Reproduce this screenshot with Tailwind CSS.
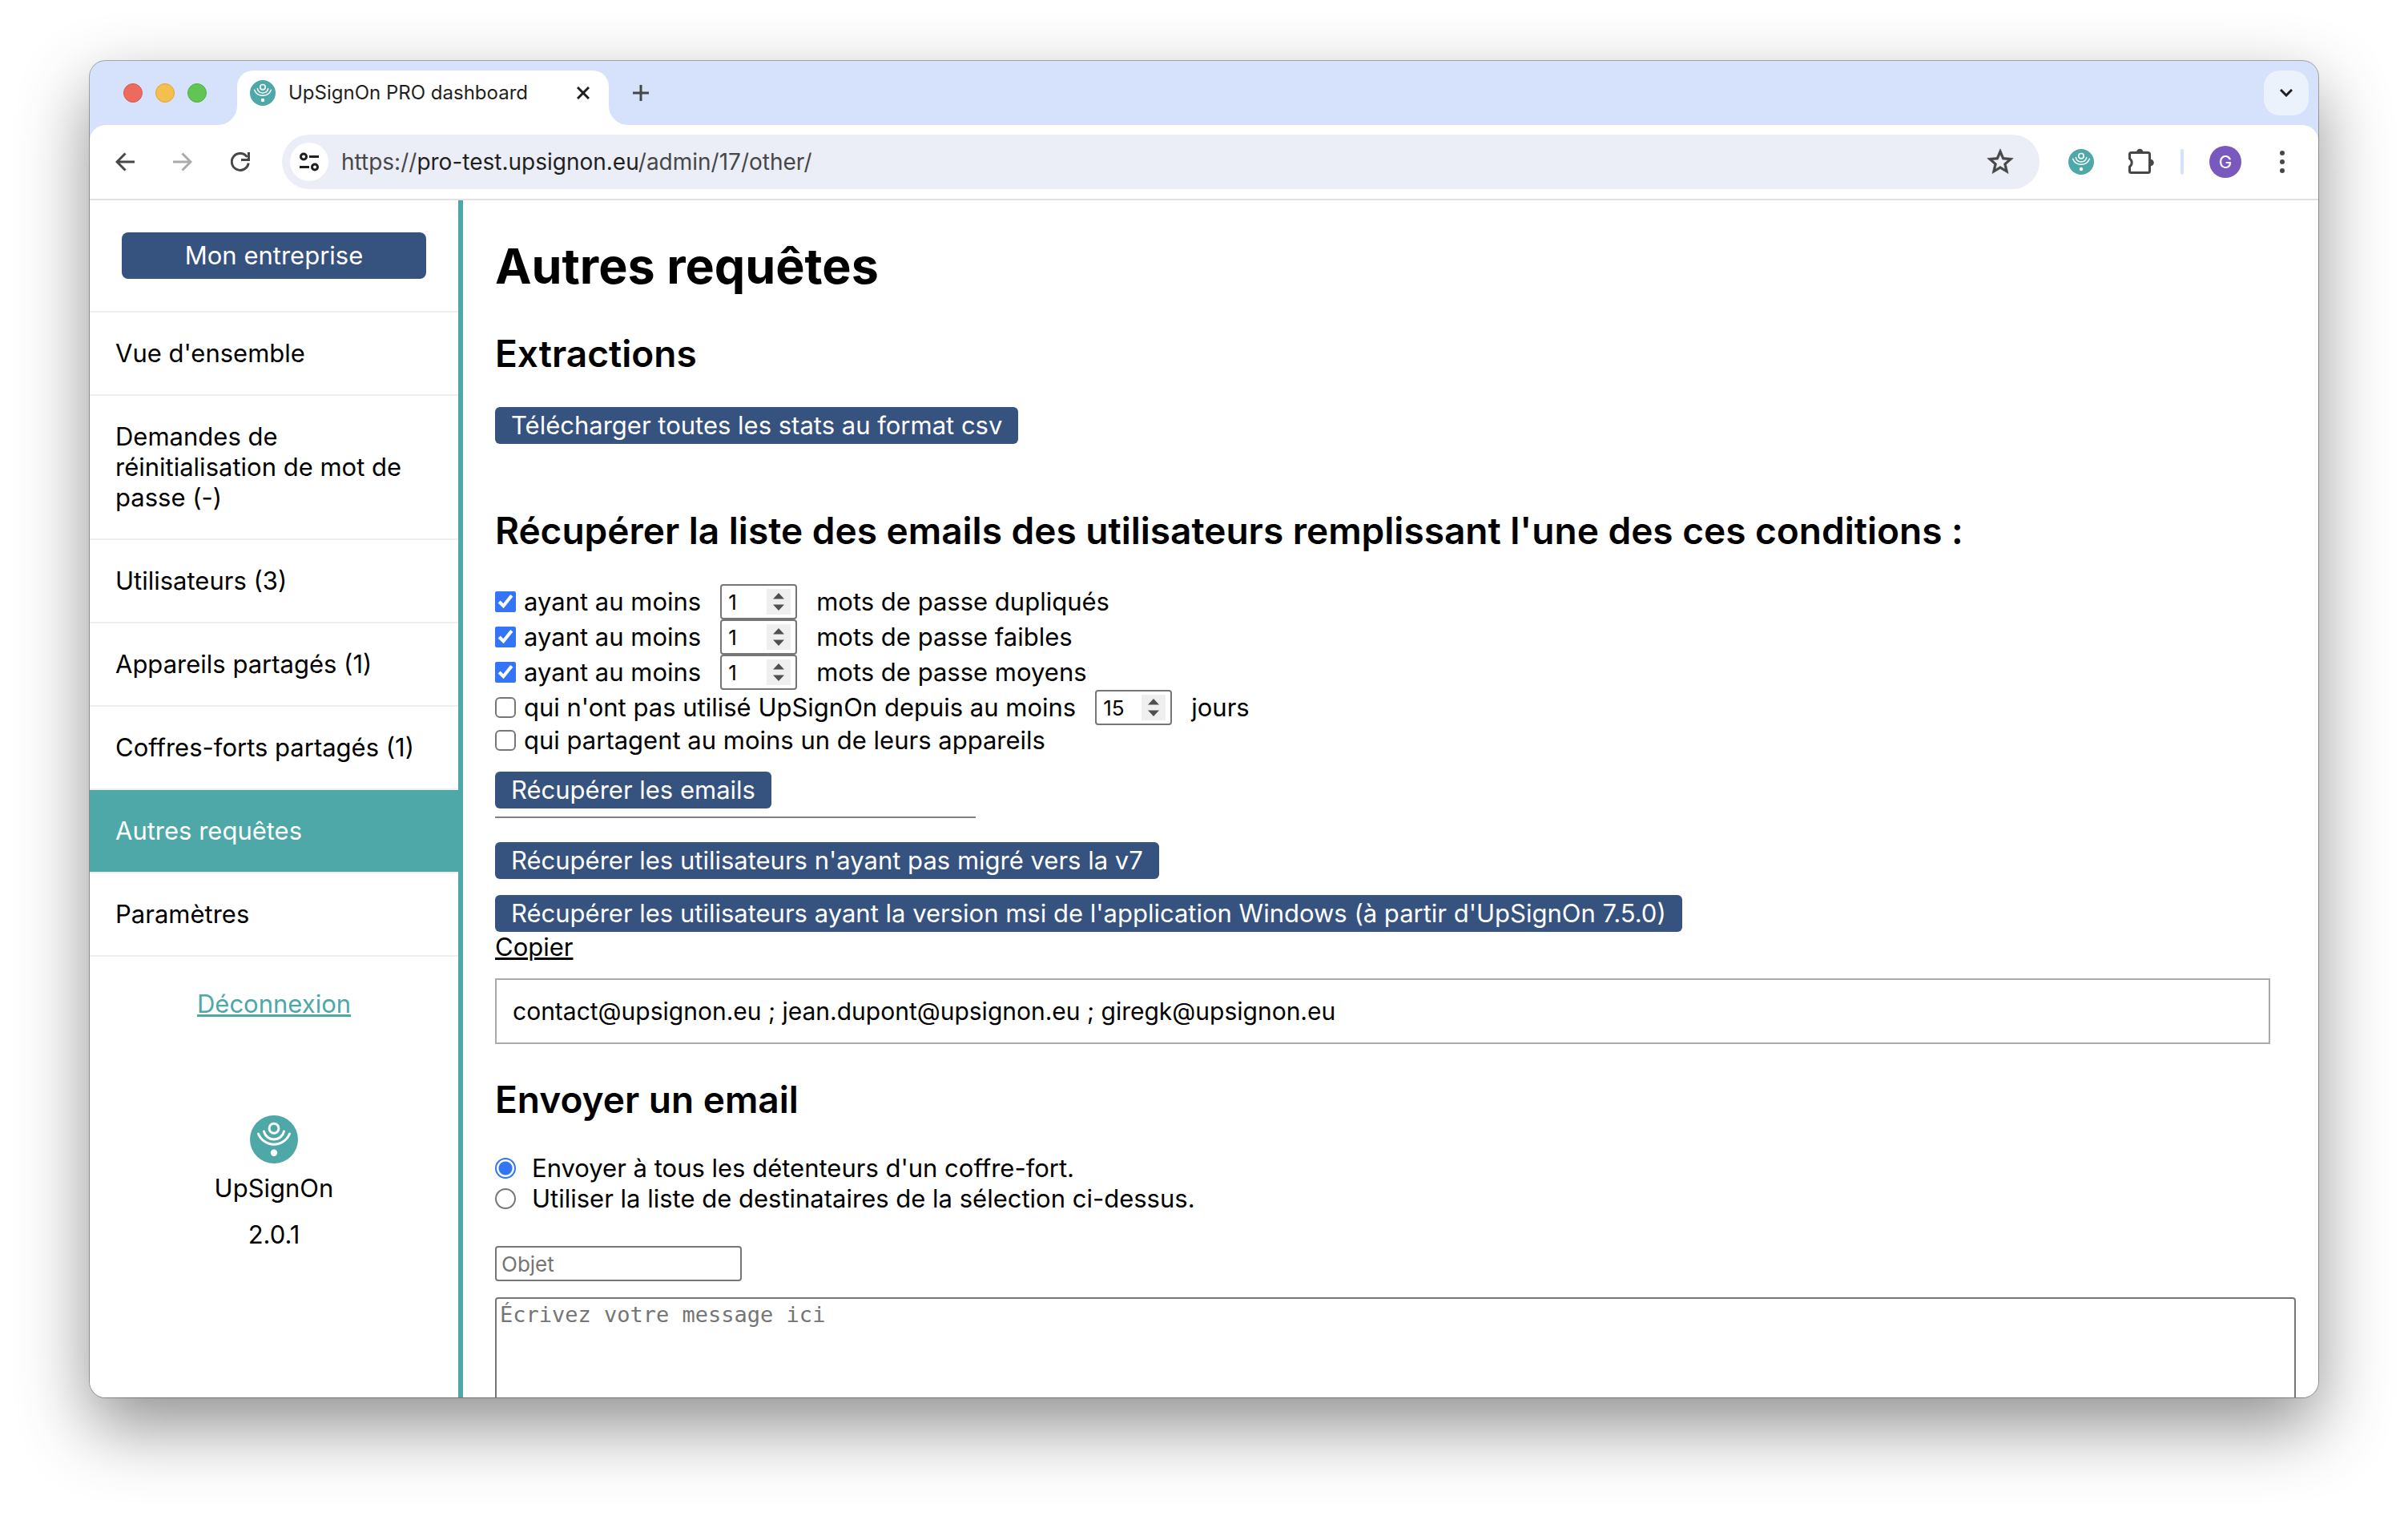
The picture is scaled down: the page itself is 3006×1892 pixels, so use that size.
<!DOCTYPE html>
<html lang="fr">
<head>
<meta charset="utf-8">
<title>UpSignOn PRO dashboard</title>
<script src="https://cdn.jsdelivr.net/npm/@tailwindcss/browser@4"></script>
</head>
<body class="h-screen overflow-hidden bg-white px-[112px] pt-[76px] pb-[148px] font-[Inter,'Liberation_Sans',sans-serif] text-black">

<svg class="hidden">
  <symbol id="logo" viewBox="0 0 60 60">
    <circle cx="30" cy="30" r="30" fill="#4da8a7"/>
    <circle cx="30" cy="16.300" r="6" fill="none" stroke="#fff" stroke-width="3"/>
    <path d="M17.500 20a12.800 12.800 0 0 0 25 0M10.500 23a21 21 0 0 0 39 0" fill="none" stroke="#fff" stroke-width="3" stroke-linecap="round"/>
    <circle cx="30" cy="46.700" r="4.200" fill="#fff"/>
  </symbol>
  <symbol id="spin" viewBox="0 0 30 32">
    <rect width="30" height="32" fill="#efefef"/>
    <path d="M15 5l7 7.500H8zM15 27l7-7.500H8z" fill="#505050"/>
  </symbol>
</svg>

<div class="flex h-full flex-col overflow-hidden rounded-[20px] bg-[#d6e1fb] shadow-[0_0_0_1px_rgba(0,0,0,0.3),0_36px_88px_rgba(0,0,0,0.44)]">

  <!-- Tab strip -->
  <header class="flex h-20 shrink-0 items-end">
    <div class="flex h-full items-center gap-4 pl-[42px]">
      <span class="size-6 rounded-full border border-[#d9584e] bg-[#ec6a5e]"></span>
      <span class="size-6 rounded-full border border-[#dfa53c] bg-[#f4bf4f]"></span>
      <span class="size-6 rounded-full border border-[#50b03f] bg-[#61c554]"></span>
    </div>
    <svg class="ml-[14px] size-6" viewBox="0 0 24 24"><path d="M24 0v24H0A24 24 0 0 0 24 0z" fill="#fff"/></svg>
    <div class="flex h-17 w-[464px] items-center rounded-t-[20px] bg-white pr-6 pb-3 pl-4">
      <svg class="size-8"><use href="#logo"/></svg>
      <span class="ml-4 flex-1 text-2xl leading-8 text-[#1f1f1f]">UpSignOn PRO dashboard</span>
      <button aria-label="Fermer l'onglet"><svg class="size-4" viewBox="0 0 16 16"><path d="M1 1l14 14M15 1L1 15" stroke="#1f1f1f" stroke-width="3"/></svg></button>
    </div>
    <svg class="size-6" viewBox="0 0 24 24"><path d="M0 0v24H24A24 24 0 0 1 0 0z" fill="#fff"/></svg>
    <button aria-label="Nouvel onglet" class="mb-[30px] ml-[6px]"><svg class="size-5" viewBox="0 0 20 20"><path d="M10 0v20M0 10h20" stroke="#474747" stroke-width="3"/></svg></button>
    <button aria-label="Rechercher des onglets" class="mr-3 mb-3 ml-auto grid size-14 place-items-center rounded-[20px] bg-[#ebf2fc]"><svg class="w-4" viewBox="0 0 16 10"><path d="M1 1l7 7 7-7" fill="none" stroke="#1f1f1f" stroke-width="3"/></svg></button>
  </header>

  <!-- Toolbar -->
  <div class="flex h-[94px] shrink-0 items-center rounded-t-[20px] border-b-2 border-[#e1e1e1] bg-white pr-[42px] pl-8">
    <button aria-label="Précédent"><svg class="size-6" viewBox="0 0 24 24"><path d="M24 12H2M12.500 1.500L2 12l10.500 10.500" fill="none" stroke="#474747" stroke-width="3"/></svg></button>
    <button aria-label="Suivant" class="ml-12"><svg class="size-6" viewBox="0 0 24 24"><path d="M0 12h22M11.500 1.500L22 12 11.500 22.500" fill="none" stroke="#ababab" stroke-width="3"/></svg></button>
    <button aria-label="Actualiser" class="ml-12"><svg class="size-6" viewBox="0 0 24 24"><path d="M22.200 13.500A10.500 10.500 0 1 1 20.500 6" fill="none" stroke="#474747" stroke-width="3"/><path d="M22.500 0v9.500H13" fill="none" stroke="#474747" stroke-width="3"/></svg></button>
    <div class="ml-10 flex h-[68px] flex-1 items-center rounded-full bg-[#ebeef7] pr-8 pl-[10px]">
      <button aria-label="Informations sur le site" class="grid size-12 place-items-center rounded-full bg-white"><svg class="size-6" viewBox="0 0 24 24"><g fill="none" stroke="#1f1f1f" stroke-width="3"><circle cx="5" cy="5.500" r="3.500"/><circle cx="19" cy="18.500" r="3.500"/><path d="M12 5.500h12M0 18.500h12"/></g></svg></button>
      <p class="ml-4 flex-1 text-[28px] leading-9 text-[#474747]">https://<span class="text-[#1f1f1f]">pro-test.upsignon.eu</span>/admin/17/other/</p>
      <button aria-label="Ajouter aux favoris"><svg class="size-[34px]" viewBox="1.500 1.500 21 21"><path d="M22 9.240l-7.190-.620L12 2 9.190 8.630 2 9.240l5.460 4.730L5.820 21 12 17.270 18.180 21l-1.630-7.030L22 9.240zM12 15.400l-3.760 2.270 1-4.280-3.320-2.880 4.380-.380L12 6.100l1.710 4.040 4.380.380-3.320 2.880 1 4.280L12 15.400z" fill="#474747" stroke="#474747" stroke-width="0.400"/></svg></button>
    </div>
    <button aria-label="UpSignOn" class="ml-9"><svg class="size-8"><use href="#logo"/></svg></button>
    <button aria-label="Extensions" class="ml-10"><svg class="size-9" viewBox="0 0 36 36"><path d="M4.500 8.500a2 2 0 0 1 2-2h21a2 2 0 0 1 2 2v21a2 2 0 0 1-2 2h-21a2 2 0 0 1-2-2V24a6 6 0 0 0 0-10z" fill="none" stroke="#474747" stroke-width="3" stroke-linejoin="round"/><path d="M13 6a4.300 4.300 0 0 1 8.600 0zM30.500 14.700a4.300 4.300 0 0 1 0 8.600z" fill="#474747"/></svg></button>
    <span class="ml-8 h-8 w-1 rounded-full bg-[#d6e1fb]"></span>
    <button class="ml-8 size-10 rounded-full bg-[#7959bd] text-[22px] leading-10 text-white">G</button>
    <button aria-label="Menu" class="ml-12"><svg class="h-7 w-[6px]" viewBox="0 0 6 28"><g fill="#474747"><circle cx="3" cy="3" r="3"/><circle cx="3" cy="14" r="3"/><circle cx="3" cy="25" r="3"/></g></svg></button>
  </div>

  <!-- Page -->
  <div class="flex min-h-0 flex-1 overflow-hidden bg-white text-[31px] leading-[38px]">

    <aside class="w-[466px] shrink-0 border-r-[6px] border-[#4da8a7] text-center">
      <div class="border-b-2 border-[#eee] p-10">
        <button class="h-[58px] w-full rounded-lg bg-[#36527f] text-white">Mon entreprise</button>
      </div>
      <nav class="flex flex-col text-left">
        <a href="#" class="border-b-2 border-[#eee] p-8">Vue d'ensemble</a>
        <a href="#" class="border-b-2 border-[#eee] p-8">Demandes de réinitialisation de mot de passe (-)</a>
        <a href="#" class="border-b-2 border-[#eee] p-8">Utilisateurs (3)</a>
        <a href="#" class="border-b-2 border-[#eee] p-8">Appareils partagés (1)</a>
        <a href="#" class="border-b-2 border-[#eee] p-8">Coffres-forts partagés (1)</a>
        <a href="#" class="border-b-2 border-[#eee] bg-[#4da8a7] p-8 text-white">Autres requêtes</a>
        <a href="#" class="border-b-2 border-[#eee] p-8">Paramètres</a>
      </nav>
      <a href="#" class="mt-10 inline-block text-[#4da8a7] underline">Déconnexion</a>
      <svg class="mx-auto mt-[120px] size-15"><use href="#logo"/></svg>
      <p class="mt-3">UpSignOn</p>
      <p class="mt-5">2.0.1</p>
    </aside>

    <main class="min-w-0 flex-1 pr-7 pl-10">
      <h1 class="mt-11 text-[61px] leading-[76px] font-bold">Autres requêtes</h1>
      <h2 class="mt-[42px] text-[46px] leading-[58px] font-semibold">Extractions</h2>
      <button class="mt-[38px] block h-[46px] rounded-md bg-[#36527f] px-5 text-white">Télécharger toutes les stats au format csv</button>

      <h2 class="mt-[79px] text-[46px] leading-[58px] font-semibold">Récupérer la liste des emails des utilisateurs remplissant l'une des ces conditions :</h2>
      <form class="mt-[38px]">
        <div class="flex h-11 items-center">
          <input id="c1" type="checkbox" checked class="size-[26px] accent-[#3375f6] not-checked:appearance-none not-checked:rounded-md not-checked:border-2 not-checked:border-[#767676]">
          <label for="c1" class="ml-[10px]">ayant au moins</label>
          <span class="relative ml-6"><input aria-label="Mots de passe dupliqués" type="number" value="1" class="block h-11 w-24 appearance-none rounded border-2 border-[#767676] bg-white pl-2 text-[26px] [&::-webkit-inner-spin-button]:appearance-none"><svg class="pointer-events-none absolute top-[6px] right-2 h-8 w-[30px]"><use href="#spin"/></svg></span>
          <span class="ml-6">mots de passe dupliqués</span>
        </div>
        <div class="flex h-11 items-center">
          <input id="c2" type="checkbox" checked class="size-[26px] accent-[#3375f6] not-checked:appearance-none not-checked:rounded-md not-checked:border-2 not-checked:border-[#767676]">
          <label for="c2" class="ml-[10px]">ayant au moins</label>
          <span class="relative ml-6"><input aria-label="Mots de passe faibles" type="number" value="1" class="block h-11 w-24 appearance-none rounded border-2 border-[#767676] bg-white pl-2 text-[26px] [&::-webkit-inner-spin-button]:appearance-none"><svg class="pointer-events-none absolute top-[6px] right-2 h-8 w-[30px]"><use href="#spin"/></svg></span>
          <span class="ml-6">mots de passe faibles</span>
        </div>
        <div class="flex h-11 items-center">
          <input id="c3" type="checkbox" checked class="size-[26px] accent-[#3375f6] not-checked:appearance-none not-checked:rounded-md not-checked:border-2 not-checked:border-[#767676]">
          <label for="c3" class="ml-[10px]">ayant au moins</label>
          <span class="relative ml-6"><input aria-label="Mots de passe moyens" type="number" value="1" class="block h-11 w-24 appearance-none rounded border-2 border-[#767676] bg-white pl-2 text-[26px] [&::-webkit-inner-spin-button]:appearance-none"><svg class="pointer-events-none absolute top-[6px] right-2 h-8 w-[30px]"><use href="#spin"/></svg></span>
          <span class="ml-6">mots de passe moyens</span>
        </div>
        <div class="flex h-11 items-center">
          <input id="c4" type="checkbox" class="size-[26px] accent-[#3375f6] not-checked:appearance-none not-checked:rounded-md not-checked:border-2 not-checked:border-[#767676]">
          <label for="c4" class="ml-[10px]">qui n'ont pas utilisé UpSignOn depuis au moins</label>
          <span class="relative ml-6"><input aria-label="Nombre de jours" type="number" value="15" class="block h-11 w-24 appearance-none rounded border-2 border-[#767676] bg-white pl-2 text-[26px] [&::-webkit-inner-spin-button]:appearance-none"><svg class="pointer-events-none absolute top-[6px] right-2 h-8 w-[30px]"><use href="#spin"/></svg></span>
          <span class="ml-6">jours</span>
        </div>
        <div class="flex items-center">
          <input id="c5" type="checkbox" class="size-[26px] accent-[#3375f6] not-checked:appearance-none not-checked:rounded-md not-checked:border-2 not-checked:border-[#767676]">
          <label for="c5" class="ml-[10px]">qui partagent au moins un de leurs appareils</label>
        </div>
        <button type="button" class="mt-5 block h-[46px] rounded-md bg-[#36527f] px-5 text-white">Récupérer les emails</button>
      </form>
      <hr class="mt-[10px] w-[600px] border-t-2 border-[#808080]">
      <button class="mt-[30px] block h-[46px] rounded-md bg-[#36527f] px-5 text-white">Récupérer les utilisateurs n'ayant pas migré vers la v7</button>
      <button class="mt-5 block h-[46px] rounded-md bg-[#36527f] px-5 text-white">Récupérer les utilisateurs ayant la version msi de l'application Windows (à partir d'UpSignOn 7.5.0)</button>
      <a href="#" class="block w-fit underline">Copier</a>
      <div class="mt-5 mr-8 border-2 border-[#aaa] p-5 text-[30px]">contact@upsignon.eu ; jean.dupont@upsignon.eu ; giregk@upsignon.eu</div>

      <h2 class="mt-10 text-[46px] leading-[58px] font-semibold">Envoyer un email</h2>
      <form class="mt-[38px]">
        <div class="flex items-center">
          <input id="r1" name="dest" type="radio" checked class="size-[26px] appearance-none rounded-full border-2 border-[#767676] checked:border-[#3375f6] checked:bg-[radial-gradient(circle,#3375f6_8px,#fff_9px)]">
          <label for="r1" class="ml-5">Envoyer à tous les détenteurs d'un coffre-fort.</label>
        </div>
        <div class="flex items-center">
          <input id="r2" name="dest" type="radio" class="size-[26px] appearance-none rounded-full border-2 border-[#767676] checked:border-[#3375f6] checked:bg-[radial-gradient(circle,#3375f6_8px,#fff_9px)]">
          <label for="r2" class="ml-5">Utiliser la liste de destinataires de la sélection ci-dessus.</label>
        </div>
        <input aria-label="Objet" type="text" placeholder="Objet" class="mt-10 block h-11 w-[308px] rounded border-2 border-[#767676] px-[6px] text-[26px] placeholder:text-[#757575]">
        <textarea aria-label="Message" placeholder="Écrivez votre message ici" class="mt-5 block h-[400px] w-full resize-none rounded border-2 border-[#767676] p-1 font-['DejaVu_Sans_Mono',monospace] text-[27px] leading-8 placeholder:text-[#757575]"></textarea>
      </form>
    </main>
  </div>
</div>
</body>
</html>
